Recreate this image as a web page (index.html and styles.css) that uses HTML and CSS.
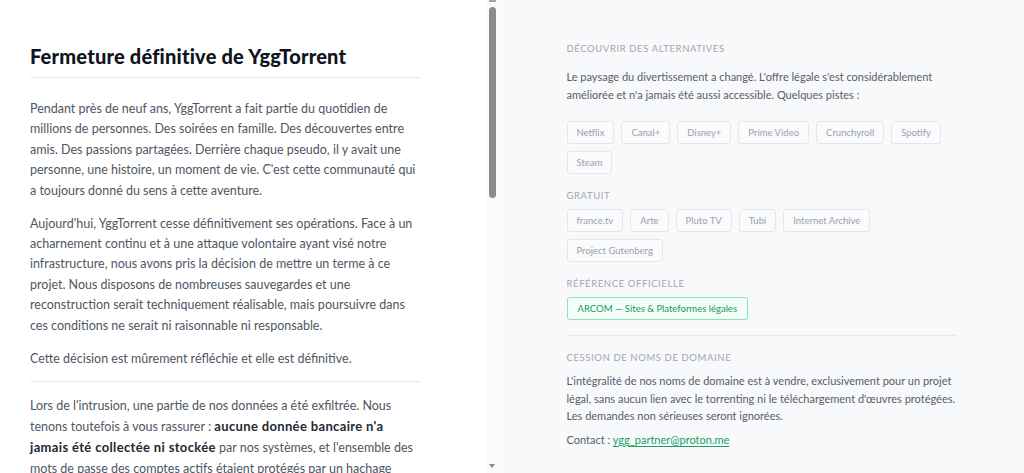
FILE: index.html
```html
<!DOCTYPE html>
<html lang="fr">
<head>
<meta charset="utf-8">
<title>Fermeture définitive de YggTorrent</title>
<link rel="stylesheet" href="styles.css">
</head>
<body>
<div class="layout">
  <div class="article-wrap">
    <main class="article">
      <div class="article-inner">
        <h1 class="title">Fermeture définitive de YggTorrent</h1>
        <p>Pendant près de neuf ans, YggTorrent a fait partie du quotidien de millions de personnes. Des soirées en famille. Des découvertes entre amis. Des passions partagées. Derrière chaque pseudo, il y avait une personne, une histoire, un moment de vie. C'est cette communauté qui a toujours donné du sens à cette aventure.</p>
        <p>Aujourd'hui, YggTorrent cesse définitivement ses opérations. Face à un acharnement continu et à une attaque volontaire ayant visé notre infrastructure, nous avons pris la décision de mettre un terme à ce projet. Nous disposons de nombreuses sauvegardes et une reconstruction serait techniquement réalisable, mais poursuivre dans ces conditions ne serait ni raisonnable ni responsable.</p>
        <p>Cette décision est mûrement réfléchie et elle est définitive.</p>
        <hr class="rule">
        <p>Lors de l'intrusion, une partie de nos données a été exfiltrée. Nous tenons toutefois à vous rassurer : <strong>aucune donnée bancaire n'a jamais été collectée ni stockée</strong> par nos systèmes, et l'ensemble des mots de passe des comptes actifs étaient protégés par un hachage robuste. Par précaution, nous vous recommandons néanmoins de modifier vos mots de passe si vous les utilisiez également sur d'autres services.</p>
        <p>Nous tenons à remercier chaleureusement toutes celles et ceux qui ont contribué, de près ou de loin, à faire vivre cette communauté pendant toutes ces années : uploaders, modérateurs, donateurs et simples membres.</p>
        <hr class="rule">
        <p>L'offre légale n'a jamais été aussi riche ni aussi accessible. Vous trouverez quelques pistes dans la colonne ci-contre pour continuer à découvrir films, séries, musique, jeux et livres.</p>
        <p>Merci pour ces neuf années. Prenez soin de vous.</p>
        <p class="signature">— L'équipe YggTorrent</p>
      </div>
    </main>
    <div class="scrollbar" aria-hidden="true">
      <span class="scroll-cap"></span>
      <span class="scroll-thumb"></span>
      <span class="scroll-arrow"></span>
    </div>
  </div>
  <aside class="side">
    <div class="side-inner">
      <section class="block">
        <h2 class="label label-lead">Découvrir des alternatives</h2>
        <p class="side-text">Le paysage du divertissement a changé. L'offre légale s'est considérablement améliorée et n'a jamais été aussi accessible. Quelques pistes :</p>
        <ul class="tags">
          <li class="tag">Netflix</li>
          <li class="tag">Canal+</li>
          <li class="tag">Disney+</li>
          <li class="tag">Prime Video</li>
          <li class="tag">Crunchyroll</li>
          <li class="tag">Spotify</li>
          <li class="tag">Steam</li>
        </ul>
        <h3 class="label">Gratuit</h3>
        <ul class="tags">
          <li class="tag">france.tv</li>
          <li class="tag">Arte</li>
          <li class="tag">Pluto TV</li>
          <li class="tag">Tubi</li>
          <li class="tag">Internet Archive</li>
          <li class="tag">Project Gutenberg</li>
        </ul>
        <h3 class="label label-official">Référence officielle</h3>
        <a class="official" href="#">ARCOM — Sites &amp; Plateformes légales</a>
      </section>
      <hr class="side-rule">
      <section class="block">
        <h2 class="label label-tight">Cession de noms de domaine</h2>
        <p class="side-text side-text-tight">L'intégralité de nos noms de domaine est à vendre, exclusivement pour un projet légal, sans aucun lien avec le torrenting ni le téléchargement d'œuvres protégées. Les demandes non sérieuses seront ignorées.</p>
        <p class="side-text contact">Contact : <a class="mail" href="#">ygg_partner@proton.me</a></p>
      </section>
    </div>
  </aside>
</div>
</body>
</html>
```

FILE: styles.css
```css
html, body {
  margin: 0;
  height: 100%;
}

body {
  font-family: Lato, "Noto Sans", sans-serif;
  overflow: hidden;
  background: #f8f9fb;
}

.layout {
  display: grid;
  grid-template-columns: 499px 1fr;
  height: 100vh;
}

/* ---------- Left: article ---------- */
.article-wrap {
  position: relative;
  background: #ffffff;
  min-height: 0;
}

.article {
  height: 100%;
  overflow-y: auto;
  scrollbar-width: none;
}

.article-inner {
  max-width: 390px;
  padding: 44px 30px 120px;
}

.title {
  margin: 0 0 21px;
  padding-bottom: 9px;
  border-bottom: 1px solid #e7e8eb;
  font-size: 20px;
  line-height: 24px;
  font-weight: 900;
  letter-spacing: 0.2px;
  color: #111522;
}

.article p {
  margin: 0 0 12.6px;
  font-size: 12.5px;
  line-height: 20.4px;
  color: #505663;
}

.article strong {
  color: #232834;
  font-weight: 700;
  font-size: 13px;
  letter-spacing: 0.35px;
}

.rule {
  border: 0;
  border-top: 1px solid #e7e8eb;
  height: 0;
  margin: -1px 0 14px;
}

/* fake (decorative) scrollbar drawn over the article's right edge */
.scrollbar {
  position: absolute;
  top: 0;
  right: 0;
  bottom: 0;
  width: 12px;
  background: #fafafa;
}

.scroll-cap {
  position: absolute;
  top: 0;
  left: 2px;
  width: 7px;
  height: 1.5px;
  background: #a3a3a3;
}

.scroll-thumb {
  position: absolute;
  top: 7px;
  left: 2px;
  width: 7px;
  height: 191px;
  border-radius: 4px;
  background: #8a8a8a;
}

.scroll-arrow {
  position: absolute;
  bottom: 5px;
  left: 2px;
  width: 0;
  height: 0;
  border-left: 3.5px solid transparent;
  border-right: 3.5px solid transparent;
  border-top: 4px solid #8a8a8a;
}

/* ---------- Right: sidebar ---------- */
.side {
  background: #f8f9fb;
}

.side-inner {
  max-width: 390px;
  margin: 0 auto;
  padding-top: 42px;
}

.label {
  margin: 15px 0 6px;
  font-size: 9.5px;
  line-height: 14px;
  font-weight: 400;
  letter-spacing: 0.6px;
  text-transform: uppercase;
  color: #a1a6b0;
}

.label-lead {
  margin-top: 0;
  margin-bottom: 12px;
}

.label-official {
  margin-bottom: 5px;
}

.label-tight {
  margin-top: 15px;
  margin-bottom: 7px;
}

.side-text {
  margin: 0 0 17px;
  font-size: 11px;
  line-height: 18px;
  color: #575d6a;
}

.side-text-tight {
  line-height: 17.5px;
  margin-bottom: 6px;
}

.contact {
  margin-bottom: 0;
}

.tags {
  list-style: none;
  margin: 0;
  padding: 0;
  display: flex;
  flex-wrap: wrap;
  gap: 7px;
}

.tag {
  padding: 4px 9px;
  font-size: 9.5px;
  line-height: 13px;
  color: #9ba0aa;
  background: #fafbfc;
  border: 1px solid #e4e6ea;
  border-radius: 3px;
}

.official {
  display: inline-block;
  padding: 4px 10px;
  font-size: 9.5px;
  line-height: 13px;
  color: #13995f;
  text-decoration: none;
  background: #f5fdf9;
  border: 1px solid #88e2bf;
  border-radius: 3px;
}

.side-rule {
  border: 0;
  border-top: 1px solid #e5e7eb;
  height: 0;
  margin: 15px 0 0;
}

.mail {
  color: #17a061;
  text-decoration: underline;
  text-underline-offset: 2px;
}
```
